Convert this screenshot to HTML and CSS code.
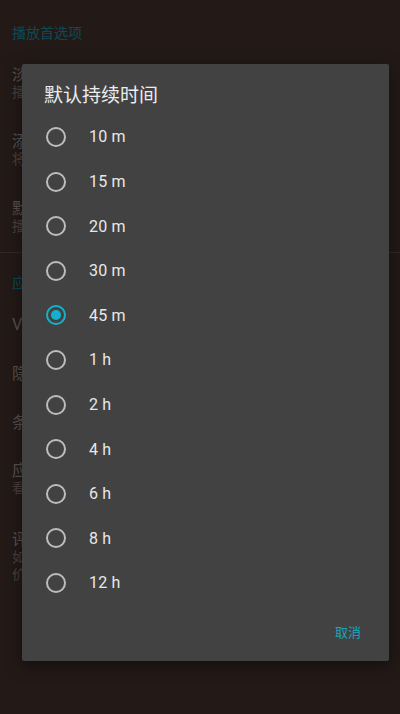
FILE: index.html
```html
<!DOCTYPE html>
<html lang="zh">
<head>
<meta charset="utf-8">
<link rel="stylesheet" href="styles.css">
</head>
<body>
<div class="screen">
  <div class="cat cat-first">播放首选项</div>
  <div class="item item-2l">
    <div class="t">淡入淡出效果</div>
    <div class="s">播放开始和结束时音量渐变</div>
  </div>
  <div class="item item-2l">
    <div class="t">添加到播放列表</div>
    <div class="s">将声音添加到当前播放列表</div>
  </div>
  <div class="item item-2l">
    <div class="t">默认持续时间</div>
    <div class="s">播放的默认持续时间</div>
  </div>
  <div class="divider"></div>
  <div class="cat cat-second">应用设置</div>
  <div class="item item-1l"><div class="t">V 版本信息</div></div>
  <div class="item item-1l"><div class="t">隐私政策</div></div>
  <div class="item item-1l"><div class="t">条款和条件</div></div>
  <div class="item item-app">
    <div class="t">应用推荐</div>
    <div class="s">看看我们的其他应用</div>
  </div>
  <div class="item item-rate">
    <div class="t">评价应用</div>
    <div class="s">如果您喜欢这款应用</div>
    <div class="s">价请给我们评分</div>
  </div>
</div>

<div class="dialog">
  <div class="title">默认持续时间</div>
  <div class="options">
    <div class="opt"><span class="radio"></span><span class="lbl">10 m</span></div>
    <div class="opt"><span class="radio"></span><span class="lbl">15 m</span></div>
    <div class="opt"><span class="radio"></span><span class="lbl">20 m</span></div>
    <div class="opt"><span class="radio"></span><span class="lbl">30 m</span></div>
    <div class="opt"><span class="radio checked"></span><span class="lbl">45 m</span></div>
    <div class="opt"><span class="radio"></span><span class="lbl">1 h</span></div>
    <div class="opt"><span class="radio"></span><span class="lbl">2 h</span></div>
    <div class="opt"><span class="radio"></span><span class="lbl">4 h</span></div>
    <div class="opt"><span class="radio"></span><span class="lbl">6 h</span></div>
    <div class="opt"><span class="radio"></span><span class="lbl">8 h</span></div>
    <div class="opt"><span class="radio"></span><span class="lbl">12 h</span></div>
  </div>
  <div class="actions"><span class="btn">取消</span></div>
</div>
</body>
</html>
```
FILE: styles.css
```css
html, body {
  margin: 0;
  padding: 0;
  width: 400px;
  height: 714px;
  overflow: hidden;
  background: #231a17;
  font-family: Roboto, "Noto Sans CJK SC", sans-serif;
}
.screen {
  padding-left: 12px;
  white-space: nowrap;
}
.cat {
  font-size: 14px;
  line-height: 18px;
  color: #0c4a54;
}
.cat-first {
  padding-top: 24px;
  height: 26.5px;
}
.cat-second {
  padding-top: 21px;
  height: 26.5px;
}
.item {
  display: flex;
  flex-direction: column;
  justify-content: center;
}
.item-2l { height: 67px; }
.item-1l { height: 49px; }
.item-app { height: 65px; }
.item-rate { height: 90px; }
.t {
  font-size: 16px;
  line-height: 18px;
  color: #5a5250;
}
.s {
  font-size: 14px;
  line-height: 17.5px;
  color: #4a4240;
}
.divider {
  height: 1px;
  margin-left: -12px;
  background: #322926;
}
.dialog {
  position: absolute;
  left: 22px;
  top: 64px;
  width: 367px;
  height: 597px;
  background: #424242;
  border-radius: 2px;
  box-shadow: 0 4px 16px rgba(0, 0, 0, 0.5);
  display: flex;
  flex-direction: column;
  box-sizing: border-box;
}
.title {
  padding: 20px 0 0 22px;
  font-size: 19px;
  line-height: 24px;
  color: #ececec;
  height: 30.7px;
}
.options {
  display: flex;
  flex-direction: column;
}
.opt {
  height: 44.6px;
  display: flex;
  align-items: center;
  padding-left: 24px;
}
.radio {
  width: 20px;
  height: 20px;
  box-sizing: border-box;
  border: 2px solid #bdbdbd;
  border-radius: 50%;
  display: flex;
  align-items: center;
  justify-content: center;
  flex: none;
}
.radio.checked {
  border-color: #14b1cc;
}
.radio.checked::after {
  content: "";
  width: 10px;
  height: 10px;
  border-radius: 50%;
  background: #14b1cc;
}
.lbl {
  margin-left: 23px;
  font-size: 16px;
  color: #e8e8e8;
  letter-spacing: 0.2px;
}
.actions {
  display: flex;
  justify-content: flex-end;
  padding: 19px 28px 0 0;
}
.btn {
  font-size: 13px;
  line-height: 18px;
  color: #19a6bc;
}
```
